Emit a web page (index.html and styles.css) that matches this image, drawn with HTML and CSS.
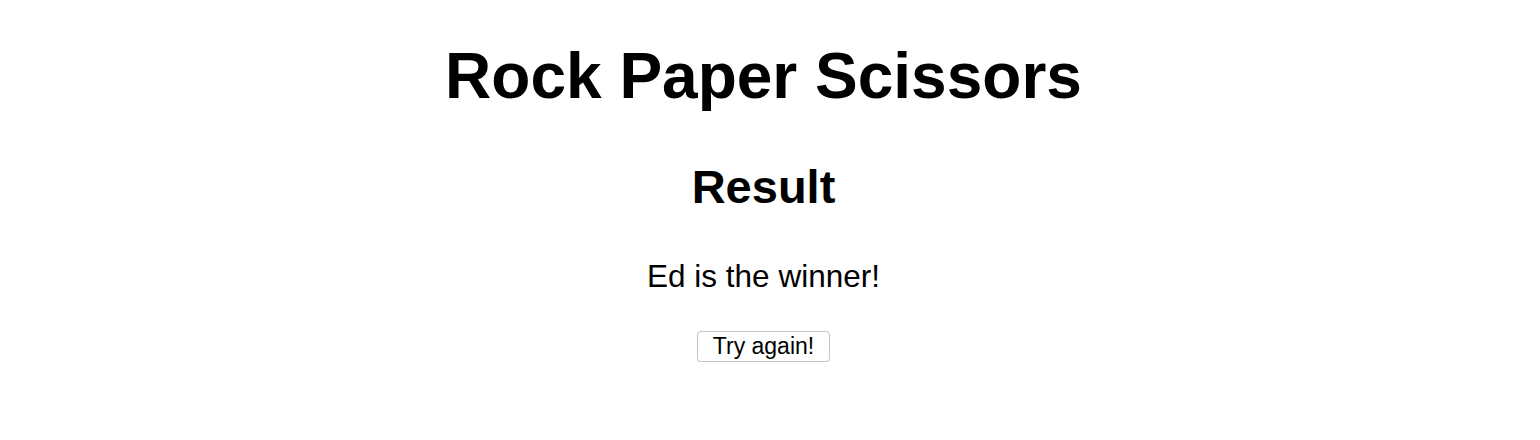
FILE: index.html
```html
<!DOCTYPE html>
<html>
<head>
<meta charset="utf-8">
<link rel="stylesheet" href="styles.css">
</head>
<body>
<main class="page">
  <h1 class="title">Rock Paper Scissors</h1>
  <h2 class="result-title">Result</h2>
  <p class="winner">Ed is the winner!</p>
  <button class="retry">Try again!</button>
</main>
</body>
</html>
```

FILE: styles.css
```css
html, body {
  margin: 0;
  padding: 0;
  background: #ffffff;
}
body {
  font-family: "Liberation Sans", Arial, Helvetica, sans-serif;
  color: #000;
}
.page {
  display: flex;
  flex-direction: column;
  align-items: center;
  padding-top: 40px;
  padding-right: 13px;
}
.title {
  margin: 0;
  font-size: 64px;
  font-weight: bold;
  line-height: 72px;
}
.result-title {
  margin: 48px 0 0;
  font-size: 47px;
  font-weight: bold;
  line-height: 54px;
}
.winner {
  margin: 44px 0 0;
  font-size: 31.5px;
  line-height: 36px;
}
.retry {
  margin-top: 37px;
  width: 133px;
  height: 31px;
  padding: 0;
  font-family: "Liberation Sans", Arial, Helvetica, sans-serif;
  font-size: 23px;
  color: #000;
  background: #fff;
  border: 1px solid #c4c4c4;
  border-radius: 4px;
  box-shadow: 0 1px 1px rgba(0,0,0,0.08);
}
```
